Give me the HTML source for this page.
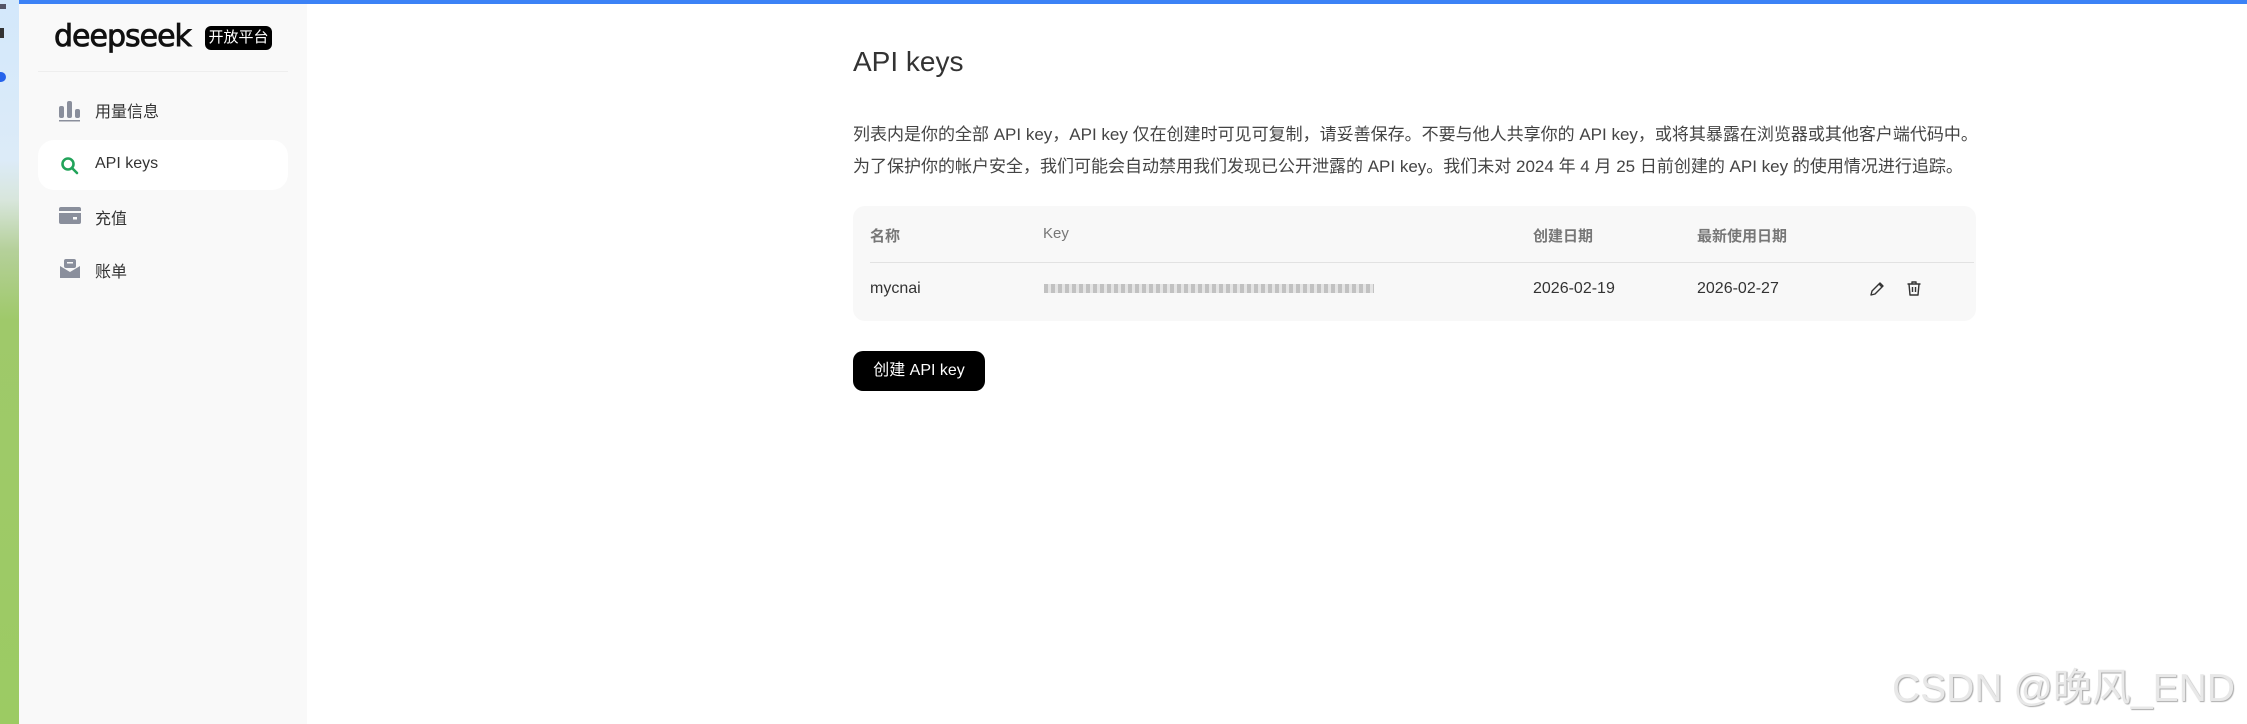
<!DOCTYPE html>
<html><head><meta charset="utf-8"><style>
*{margin:0;padding:0;box-sizing:border-box}
body{width:2247px;height:724px;overflow:hidden;background:#fff;font-family:"Liberation Sans","Noto Sans CJK SC",sans-serif;position:relative;color:#333}
.strip{position:absolute;left:0;top:0;width:19px;height:724px;background:linear-gradient(#d3e8fb 0,#dcebf8 160px,#d8e6dc 200px,#b5d09a 250px,#9fc96a 320px,#9ccb63 724px)}
.top{position:absolute;left:19px;top:0;right:0;height:4px;background:#3c82f6}
.side{position:absolute;left:19px;top:4px;width:288px;height:720px;background:#f9f9f9}
.abs{position:absolute}
.logo{left:54px;top:19px;font-size:30px;font-family:"DejaVu Sans",sans-serif;letter-spacing:-1px;color:#111;-webkit-text-stroke:0.8px #111}
.badge{left:205px;top:26px;width:67px;height:24px;background:#000;color:#fff;border-radius:6px;font-size:15px;line-height:24px;text-align:center}
.div{left:38px;top:71px;width:250px;height:1px;background:#eee}
.sel{left:38px;top:140px;width:250px;height:50px;background:#fff;border-radius:16px}
.mi{left:95px;font-size:16px;color:#333}
.p{left:853px;font-size:17px;color:#444;white-space:nowrap}
.tbl{left:853px;top:206px;width:1123px;height:115px;background:#f8f8f8;border-radius:12px}
.th{top:225px;font-size:15px;color:#777;font-weight:bold}
.td{top:280px;font-size:16px;color:#333}
.btn{left:853px;top:351px;width:132px;height:40px;background:#000;border-radius:10px;color:#fff;font-size:16px;line-height:40px;text-align:center}
.wm{left:1892px;top:657px;font-size:39px;color:#e8e8e8;text-shadow:1px 1px 1px #aaa;white-space:nowrap}
</style></head><body>
<div class="strip"></div>
<div class="abs" style="left:0;top:4px;width:6px;height:5px;background:#556"></div>
<div class="abs" style="left:0;top:28px;width:4px;height:10px;border:2px solid #333"></div>
<div class="abs" style="left:0;top:72px;width:6px;height:10px;border-radius:0 5px 5px 0;background:#2563eb"></div>
<div class="side"></div>
<div class="top"></div>
<div class="abs logo">deepseek</div>
<div class="abs badge">开放平台</div>
<div class="abs div"></div>
<div class="abs sel"></div>
<svg class="abs" style="left:58px;top:100px" width="23" height="22" viewBox="0 0 23 22"><rect x="1" y="6" width="5" height="12" rx="2" fill="#8a8f9c"/><rect x="9" y="1" width="5" height="17" rx="2" fill="#8a8f9c"/><rect x="17" y="9" width="5" height="9" rx="2" fill="#8a8f9c"/><rect x="1" y="20" width="21" height="1.5" fill="#8a8f9c"/></svg>
<div class="abs mi" style="top:98px">用量信息</div>
<svg class="abs" style="left:60px;top:156px" width="20" height="20" viewBox="0 0 20 20"><circle cx="8" cy="8" r="5.5" fill="none" stroke="#22a35a" stroke-width="2.6"/><path d="M12 12l5 5" stroke="#22a35a" stroke-width="2.6" stroke-linecap="round"/></svg>
<div class="abs mi" style="top:155px">API keys</div>
<svg class="abs" style="left:59px;top:207px" width="22" height="18" viewBox="0 0 22 18"><rect x="0" y="0" width="22" height="17" rx="2" fill="#8a8f9c"/><rect x="0" y="4" width="22" height="2" fill="#f9f9f9"/><rect x="14" y="10" width="4" height="2.5" fill="#f9f9f9"/></svg>
<div class="abs mi" style="top:205px">充值</div>
<svg class="abs" style="left:60px;top:259px" width="20" height="20" viewBox="0 0 20 20"><rect x="4" y="0" width="12" height="9" rx="2" fill="#8a8f9c"/><path d="M0 7l10 6 10-6v12H0z" fill="#8a8f9c"/><rect x="7" y="3" width="6" height="1.5" fill="#f9f9f9"/></svg>
<div class="abs mi" style="top:258px">账单</div>

<div class="abs" style="left:853px;top:46px;font-size:28px;color:#333">API keys</div>
<div class="abs p" style="top:120px">列表内是你的全部 API key，API key 仅在创建时可见可复制，请妥善保存。不要与他人共享你的 API key，或将其暴露在浏览器或其他客户端代码中。</div>
<div class="abs p" style="top:152px">为了保护你的帐户安全，我们可能会自动禁用我们发现已公开泄露的 API key。我们未对 2024 年 4 月 25 日前创建的 API key 的使用情况进行追踪。</div>
<div class="abs tbl"></div>
<div class="abs th" style="left:870px">名称</div>
<div class="abs th" style="left:1043px;font-weight:normal">Key</div>
<div class="abs th" style="left:1533px">创建日期</div>
<div class="abs th" style="left:1697px">最新使用日期</div>
<div class="abs" style="left:870px;top:262px;width:1104px;height:1px;background:#e2e2e2"></div>
<div class="abs td" style="left:870px">mycnai</div>
<div class="abs" style="left:1044px;top:284px;width:330px;height:9px;background:repeating-linear-gradient(90deg,#aaa 0 4px,#ddd 4px 7px);opacity:.7"></div>
<div class="abs td" style="left:1533px">2026-02-19</div>
<div class="abs td" style="left:1697px">2026-02-27</div>
<svg class="abs" style="left:1869px;top:281px" width="16" height="16" viewBox="0 0 16 16"><path d="M2 14l1-4 8-8 3 3-8 8z M10 3l3 3" fill="none" stroke="#333" stroke-width="1.4" stroke-linejoin="round"/></svg>
<svg class="abs" style="left:1906px;top:280px" width="16" height="17" viewBox="0 0 16 17"><path d="M1.5 4h13M6 4V2h4v2M3 4l1 11h8l1-11M6.5 7v5M9.5 7v5" fill="none" stroke="#333" stroke-width="1.4" stroke-linejoin="round"/></svg>
<div class="abs btn">创建 API key</div>
<div class="abs wm">CSDN @晚风_END</div>
</body></html>
